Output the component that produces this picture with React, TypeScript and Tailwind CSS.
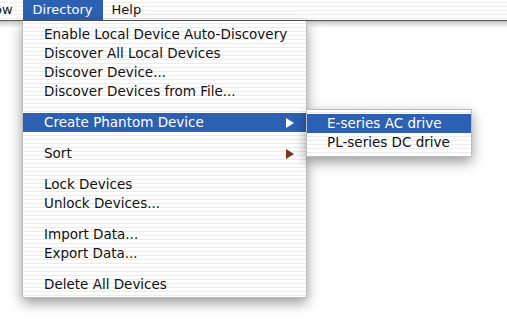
import React from 'react';

const stripes =
  'bg-[image:repeating-linear-gradient(180deg,#ffffff_0px,#ffffff_2px,#ececec_2px,#ececec_3px,#ffffff_3px,#ffffff_4px)]';

type Item = { label: string; sub?: boolean; active?: boolean } | 'sep';

const ITEMS: Item[] = [
  { label: 'Enable Local Device Auto-Discovery' },
  { label: 'Discover All Local Devices' },
  { label: 'Discover Device...' },
  { label: 'Discover Devices from File...' },
  'sep',
  { label: 'Create Phantom Device', sub: true, active: true },
  'sep',
  { label: 'Sort', sub: true },
  'sep',
  { label: 'Lock Devices' },
  { label: 'Unlock Devices...' },
  'sep',
  { label: 'Import Data...' },
  { label: 'Export Data...' },
  'sep',
  { label: 'Delete All Devices' },
];

const Arrow: React.FC<{ color: string }> = ({ color }) => (
  <svg width="8" height="10" viewBox="0 0 8 10" className="shrink-0">
    <polygon points="0,0 8,5 0,10" fill={color} />
  </svg>
);

export default function App() {
  return (
    <div className="relative w-[507px] h-[328px] overflow-hidden bg-white font-['DejaVu_Sans',sans-serif] text-[#111] antialiased">
      {/* menu bar */}
      <div className={`h-[21px] flex border-b border-[#555] text-[13px] leading-[20px] ${stripes}`}>
        <div className="ml-[-6px] pr-[10px]">ow</div>
        <div className="bg-[#2c60b2] text-white px-[10px]">Directory</div>
        <div className="px-[9px]">Help</div>
      </div>
      <div className="h-[7px] bg-gradient-to-b from-[#00000038] to-transparent" />

      {/* Directory menu */}
      <div
        className={`absolute left-[22px] top-[21px] w-[285px] pt-[4px] pb-[3px] border-x border-b border-[#bdbdbd] shadow-[0_5px_12px_rgba(0,0,0,0.4)] text-[13.5px] ${stripes}`}
      >
        {ITEMS.map((it, i) =>
          it === 'sep' ? (
            <div key={i} className="h-[12px]" />
          ) : (
            <div
              key={i}
              className={`h-[19px] leading-[19px] pl-[21px] pr-[12px] flex items-center justify-between ${
                it.active ? 'bg-[#2c60b2] text-white' : ''
              }`}
            >
              <span>{it.label}</span>
              {it.sub && <Arrow color={it.active ? '#ffffff' : '#7a3518'} />}
            </div>
          )
        )}
      </div>

      {/* Create Phantom Device submenu */}
      <div
        className={`absolute left-[306px] top-[109px] w-[166px] pt-[4px] pb-[4px] border border-[#bdbdbd] shadow-[0_5px_12px_rgba(0,0,0,0.4)] text-[13.5px] ${stripes}`}
      >
        <div className="h-[19px] leading-[19px] pl-[20px] bg-[#2c60b2] text-white">E-series AC drive</div>
        <div className="h-[19px] leading-[19px] pl-[20px]">PL-series DC drive</div>
      </div>
    </div>
  );
}
